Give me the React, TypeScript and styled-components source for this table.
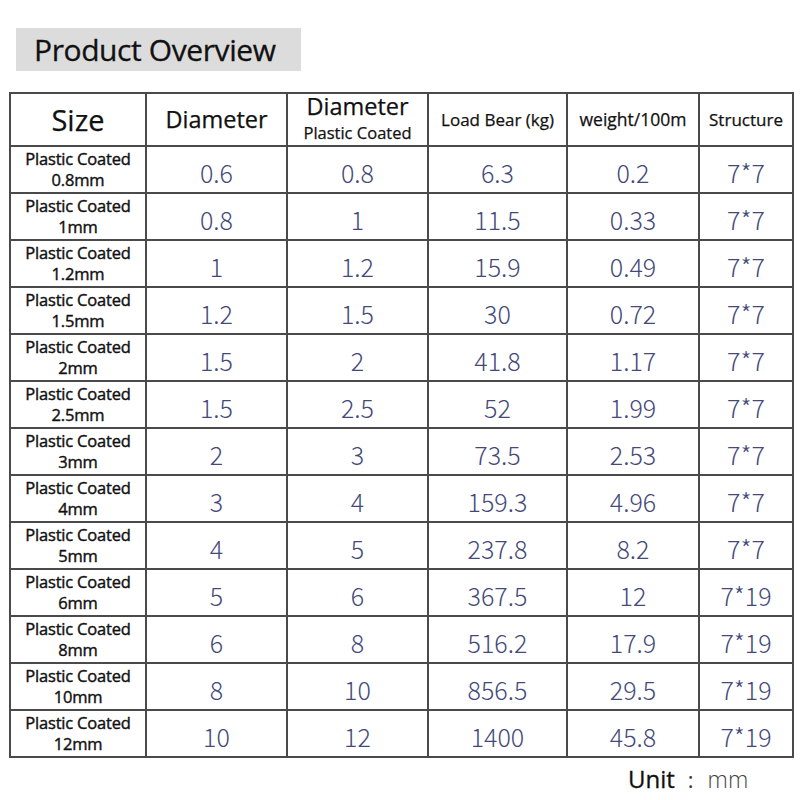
import React from "react";
import styled, { createGlobalStyle } from "styled-components";

const Global = createGlobalStyle`
  html, body { margin: 0; padding: 0; background: #fff; }
  body { font-family: "Open Sans", "Noto Sans", sans-serif; color: #111; }
`;

const Page = styled.div`
  width: 800px;
  height: 800px;
  padding: 28px 0 0 9px;
  box-sizing: border-box;
  display: flex;
  flex-direction: column;
`;

const TitleBox = styled.div`
  margin-left: 7px;
  width: 285px;
  height: 43px;
  background: #dcdcdc;
  display: flex;
  align-items: center;
  padding-left: 18px;
  box-sizing: border-box;
  font-size: 30px;
  letter-spacing: -0.4px;
  color: #111;
  -webkit-text-stroke: 0.3px #111;
`;

const Table = styled.div`
  margin-top: 21px;
  display: grid;
  grid-template-columns: 136px 141px 141px 139px 132px 94px;
  grid-template-rows: 53px repeat(13, 47px);
  border-left: 2px solid #4a4a4a;
  border-top: 2px solid #4a4a4a;
  width: max-content;
  box-sizing: border-box;
`;

const Cell = styled.div<{ $size?: number }>`
  border-right: 2px solid #4a4a4a;
  border-bottom: 2px solid #4a4a4a;
  display: flex;
  flex-direction: column;
  align-items: center;
  justify-content: center;
  text-align: center;
  box-sizing: border-box;
  font-size: ${(p) => p.$size ?? 16}px;
  line-height: 1.15;
  color: #111;
  -webkit-text-stroke: 0.25px #111;
`;

const StackHead = styled(Cell)`
  line-height: 24px;
  padding-bottom: 3px;
`;

const SubHead = styled.span`
  font-size: 16.5px;
  line-height: 19px;
  margin-top: 5px;
`;

const Label = styled(Cell)`
  font-size: 16.5px;
  font-weight: 400;
  line-height: 21px;
  letter-spacing: -0.2px;
  padding-bottom: 2px;
  -webkit-text-stroke: 0.4px #111;
`;

const Num = styled(Cell)`
  font-family: "Noto Sans CJK SC", "Open Sans", sans-serif;
  font-weight: 300;
  font-size: 25px;
  color: #44497a;
  padding-top: 5px;
  -webkit-text-stroke: 0;
`;

const UnitRow = styled.div`
  display: flex;
  align-items: baseline;
  margin-top: 4px;
  padding-left: 619px;
`;

const UnitLabel = styled.span`
  color: #111;
  font-size: 24px;
  -webkit-text-stroke: 0.3px #111;
`;

const UnitColon = styled.span`
  color: #333;
  font-size: 22px;
  margin: 0 14px 0 13px;
`;

const UnitValue = styled.span`
  color: #444;
  font-weight: 300;
  font-size: 23px;
`;

const rows: [string, string, string, string, string, string][] = [
  ["0.8mm", "0.6", "0.8", "6.3", "0.2", "7*7"],
  ["1mm", "0.8", "1", "11.5", "0.33", "7*7"],
  ["1.2mm", "1", "1.2", "15.9", "0.49", "7*7"],
  ["1.5mm", "1.2", "1.5", "30", "0.72", "7*7"],
  ["2mm", "1.5", "2", "41.8", "1.17", "7*7"],
  ["2.5mm", "1.5", "2.5", "52", "1.99", "7*7"],
  ["3mm", "2", "3", "73.5", "2.53", "7*7"],
  ["4mm", "3", "4", "159.3", "4.96", "7*7"],
  ["5mm", "4", "5", "237.8", "8.2", "7*7"],
  ["6mm", "5", "6", "367.5", "12", "7*19"],
  ["8mm", "6", "8", "516.2", "17.9", "7*19"],
  ["10mm", "8", "10", "856.5", "29.5", "7*19"],
  ["12mm", "10", "12", "1400", "45.8", "7*19"],
];

export default function App() {
  return (
    <>
      <Global />
      <Page>
        <TitleBox>Product Overview</TitleBox>
        <Table>
          <Cell $size={29}>Size</Cell>
          <Cell $size={23.5}>Diameter</Cell>
          <StackHead $size={23.5}>
            <span>Diameter</span>
            <SubHead>Plastic Coated</SubHead>
          </StackHead>
          <Cell $size={17}>Load Bear (kg)</Cell>
          <Cell $size={17.5}>weight/100m</Cell>
          <Cell $size={17}>Structure</Cell>
          {rows.map((r) => (
            <React.Fragment key={r[0]}>
              <Label>
                <span>Plastic Coated</span>
                <span>{r[0]}</span>
              </Label>
              {r.slice(1).map((v, i) => (
                <Num key={i}>{v}</Num>
              ))}
            </React.Fragment>
          ))}
        </Table>
        <UnitRow>
          <UnitLabel>Unit</UnitLabel>
          <UnitColon>:</UnitColon>
          <UnitValue>mm</UnitValue>
        </UnitRow>
      </Page>
    </>
  );
}
